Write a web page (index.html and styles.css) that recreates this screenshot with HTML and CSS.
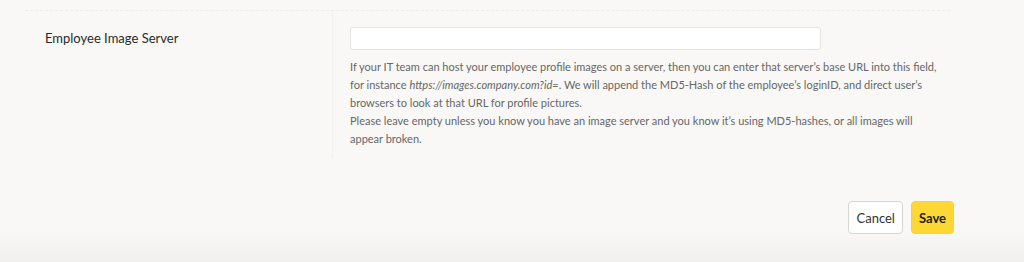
FILE: index.html
```html
<!DOCTYPE html>
<html lang="en">
<head>
  <meta charset="UTF-8">
  <title>Settings</title>
  <link rel="stylesheet" href="styles.css">
</head>
<body>
  <div class="page">
    <section class="setting-row">
      <div class="setting-label">Employee Image Server</div>
      <div class="setting-field">
        <input type="text" class="text-input">
        <p class="help-text">
          If your IT team can host your employee profile images on a server, then you can enter that server’s base URL into this field, for instance <em>https://images.company.com?id=</em>. We will append the MD5-Hash of the employee’s loginID, and direct user’s browsers to look at that URL for profile pictures.<br>
          Please leave empty unless you know you have an image server and you know it’s using MD5-hashes, or all images will appear broken.
        </p>
      </div>
    </section>

    <footer class="form-actions">
      <button class="button button-outline">Cancel</button>
      <button class="button button-primary">Save</button>
    </footer>
  </div>
</body>
</html>
```

FILE: styles.css
```css
body {
  font-family: Lato, "Open Sans", sans-serif;
  background-color: #f9f8f6;
  color: #2a2a2a;
  margin: 0;
  padding: 0;
}

.page {
  height: 262px;
  box-sizing: border-box;
  padding: 10px 0 0 25px;
  background: linear-gradient(to bottom, #f9f8f6 0, #f9f8f6 230px, #f0efed 262px);
}

.setting-row {
  display: grid;
  grid-template-columns: 308px 617px;
  border-top: 1px dashed #efedea;
  width: 925px;
}

.setting-label {
  padding: 19px 0 0 20px;
  font-size: 13px;
  border-right: 1px dotted #ebe9e6;
  height: 128px;
}

.setting-field {
  padding: 16px 0 0 17px;
}

.text-input {
  display: block;
  box-sizing: border-box;
  width: 471px;
  height: 23px;
  border: 1px solid #e6e4e1;
  border-radius: 3px;
  background-color: #fff;
  margin: 0;
}

.help-text {
  margin: 8px 0 0;
  width: 598px;
  font-size: 11px;
  line-height: 18px;
  color: #666;
}

.form-actions {
  display: flex;
  justify-content: flex-end;
  gap: 8px;
  padding: 43px 70px 0 0;
}

.button {
  font-family: Lato, "Open Sans", sans-serif;
  font-size: 13px;
  height: 33px;
  padding: 0 7px;
  border-radius: 4px;
  cursor: pointer;
}

.button-outline {
  background-color: #fff;
  border: 1px solid #d8d6d3;
  color: #333;
}

.button-primary {
  background-color: #fdd835;
  border: 1px solid #f6d23a;
  color: #222;
  font-weight: 700;
}
```
